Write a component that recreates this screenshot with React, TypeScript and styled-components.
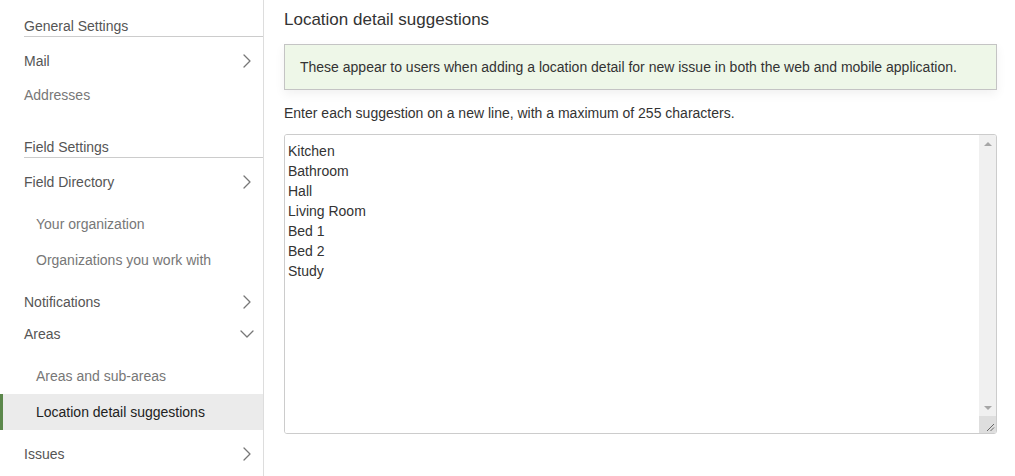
import { ChevronDown, ChevronRight } from "lucide-react";
import styled, { createGlobalStyle } from "styled-components";

const GlobalStyle = createGlobalStyle`
  body {
    margin: 0;
    font-family: "Liberation Sans", Arial, sans-serif;
    font-size: 14px;
    color: #333;
    background: #fff;
  }
`;

const Page = styled.div`
  display: flex;
  height: 476px;
  overflow: hidden;
`;

const Sidebar = styled.nav`
  width: 263px;
  flex-shrink: 0;
  border-right: 1px solid #ddd;
  padding-top: 18px;
`;

const SectionTitle = styled.div<{ $gap?: number }>`
  margin: ${(p) => p.$gap ?? 0}px 0 0 24px;
  padding-bottom: 1px;
  border-bottom: 1px solid #ccc;
  color: #555;
  line-height: 17px;
`;

const NavItem = styled.div<{ $sub?: boolean; $active?: boolean; $muted?: boolean }>`
  display: flex;
  align-items: center;
  justify-content: space-between;
  height: ${(p) => (p.$sub ? 36 : 32)}px;
  padding: 0 4px 0 ${(p) => (p.$sub ? 33 : 21)}px;
  border-left: 3px solid ${(p) => (p.$active ? "#5b874b" : "transparent")};
  background: ${(p) => (p.$active ? "#ebebeb" : "transparent")};
  color: ${(p) => (p.$active ? "#222" : p.$sub || p.$muted ? "#777" : "#555")};
`;

const Spacer = styled.div<{ $h: number }>`
  height: ${(p) => p.$h}px;
`;

const Main = styled.main`
  flex: 1;
  padding: 10px 18px 0 20px;
`;

const Title = styled.h1`
  margin: 0 0 14px;
  font-size: 17px;
  font-weight: normal;
  color: #333;
  line-height: 20px;
`;

const Alert = styled.div`
  background: #eef7e8;
  border: 1px solid #c4c4c4;
  padding: 13px 15px;
  line-height: 18px;
  box-shadow: 0 4px 10px rgba(0, 0, 0, 0.06);
`;

const Hint = styled.p`
  margin: 15px 0 13px;
  line-height: 16px;
`;

const Field = styled.div`
  display: flex;
  height: 300px;
  box-sizing: border-box;
  border: 1px solid #ccc;
  border-radius: 3px;
  overflow: hidden;
`;

const Suggestions = styled.textarea`
  flex: 1;
  box-sizing: border-box;
  padding: 6px 3px;
  border: none;
  font-family: "Liberation Sans", Arial, sans-serif;
  font-size: 14px;
  line-height: 20px;
  color: #333;
  resize: none;
  outline: none;
  overflow: hidden;
`;

const ScrollBar = styled.div`
  width: 17px;
  display: flex;
  flex-direction: column;
  background: #f0f0f0;
`;

const ArrowButton = styled.div<{ $down?: boolean }>`
  height: 17px;
  display: flex;
  align-items: center;
  justify-content: center;

  &::before {
    content: "";
    width: 0;
    height: 0;
    border-left: 4px solid transparent;
    border-right: 4px solid transparent;
    ${(p) => (p.$down ? "border-top" : "border-bottom")}: 4px solid #a6a6a6;
  }
`;

const Track = styled.div`
  flex: 1;
`;

const Grip = styled.div`
  height: 17px;
  background: #dedede;
  display: flex;
`;

const suggestions = ["Kitchen", "Bathroom", "Hall", "Living Room", "Bed 1", "Bed 2", "Study"];

const Chevron = () => <ChevronRight size={24} color="#777" strokeWidth={1.3} />;

export default function App() {
  return (
    <Page>
      <GlobalStyle />
      <Sidebar>
        <SectionTitle>General Settings</SectionTitle>
        <Spacer $h={8} />
        <NavItem>
          Mail <Chevron />
        </NavItem>
        <Spacer $h={2} />
        <NavItem $muted>Addresses</NavItem>
        <SectionTitle $gap={28}>Field Settings</SectionTitle>
        <Spacer $h={8} />
        <NavItem>
          Field Directory <Chevron />
        </NavItem>
        <Spacer $h={8} />
        <NavItem $sub>Your organization</NavItem>
        <NavItem $sub>Organizations you work with</NavItem>
        <Spacer $h={8} />
        <NavItem>
          Notifications <Chevron />
        </NavItem>
        <NavItem>
          Areas <ChevronDown size={24} color="#777" strokeWidth={1.3} />
        </NavItem>
        <Spacer $h={8} />
        <NavItem $sub>Areas and sub-areas</NavItem>
        <NavItem $sub $active>
          Location detail suggestions
        </NavItem>
        <Spacer $h={8} />
        <NavItem>
          Issues <Chevron />
        </NavItem>
      </Sidebar>
      <Main>
        <Title>Location detail suggestions</Title>
        <Alert>
          These appear to users when adding a location detail for new issue in both the web and mobile application.
        </Alert>
        <Hint>Enter each suggestion on a new line, with a maximum of 255 characters.</Hint>
        <Field>
          <Suggestions defaultValue={suggestions.join("\n")} />
          <ScrollBar>
            <ArrowButton />
            <Track />
            <ArrowButton $down />
            <Grip>
              <svg width="17" height="17" viewBox="0 0 17 17">
                <path d="M8 15L15 8M11.5 15L15 11.5" stroke="#666" strokeWidth="1" />
              </svg>
            </Grip>
          </ScrollBar>
        </Field>
      </Main>
    </Page>
  );
}
